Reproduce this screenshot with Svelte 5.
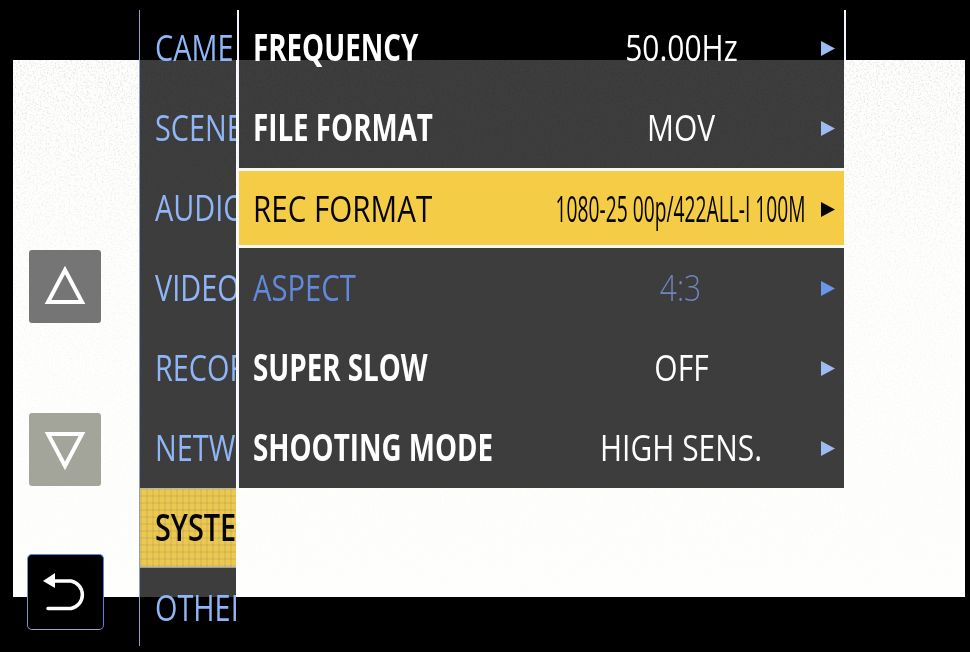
<script>
  // labels are what stays visible beside the open submenu
  const nav = [
    { label: "CAME" },
    { label: "SCENE" },
    { label: "AUDIO" },
    { label: "VIDEO" },
    { label: "RECOR" },
    { label: "NETWO" },
    { label: "SYSTE", active: true },
    { label: "OTHER" },
  ];

  const rows = [
    { label: "FREQUENCY", value: "50.00Hz" },
    { label: "FILE FORMAT", value: "MOV" },
    { label: "REC FORMAT", value: "1080-25 00p/422ALL-I 100M", active: true },
    { label: "ASPECT", value: "4:3", disabled: true },
    { label: "SUPER SLOW", value: "OFF" },
    { label: "SHOOTING MODE", value: "HIGH SENS." },
  ];
</script>

<div class="screen">
  <div class="paper">
    <svg class="grain" width="952" height="537">
      <filter id="speckle">
        <feTurbulence type="fractalNoise" baseFrequency="0.55" numOctaves="3" seed="4" />
        <feColorMatrix values="0 0 0 0 0.45  0 0 0 0 0.45  0 0 0 0 0.42  2.600 0 0 0 -1.250" />
      </filter>
      <rect width="952" height="537" filter="url(#speckle)" />
    </svg>
  </div>

  <div class="content">
    <div class="side">
      <button class="step up" aria-label="up">
        <svg width="72" height="73" viewBox="0 0 72 73">
          <polygon points="36,20 53,52 19,52" fill="none" stroke="#fff" stroke-width="4" />
        </svg>
      </button>
      <button class="step down" aria-label="down">
        <svg width="72" height="73" viewBox="0 0 72 73">
          <polygon points="19,21 53,21 36,53" fill="none" stroke="#fff" stroke-width="4" />
        </svg>
      </button>
      <button class="back" aria-label="back">
        <svg width="75" height="74" viewBox="0 0 75 74">
          <polygon points="15,26 27,18 27,33" fill="#fff" />
          <path d="M27 26H43a14 14 0 0 1 0 27.500H20" fill="none" stroke="#fff" stroke-width="3.500" stroke-linecap="round" />
        </svg>
      </button>
    </div>

    <nav class="nav">
      {#each nav as item}
        <div class="nav-item" class:active={item.active}>
          <span class="nav-label">{item.label}</span>
        </div>
      {/each}
    </nav>

    <div class="list">
      {#each rows as row}
        <div class="row" class:active={row.active} class:disabled={row.disabled}>
          <span class="label">{row.label}</span>
          <span class="value"><span class="value-text">{row.value}</span></span>
          <svg class="arrow" width="14" height="15" viewBox="0 0 14 15">
            <polygon points="0,0 14,7.500 0,15" />
          </svg>
        </div>
      {/each}
    </div>
  </div>
</div>

<style>
  :global(body) {
    margin: 0;
    background: #000;
  }

  .screen {
    position: relative;
    width: 970px;
    height: 652px;
    overflow: hidden;
    background: #000;
    font-family: "Open Sans", "Liberation Sans", sans-serif;
  }

  .paper {
    position: absolute;
    left: 13px;
    top: 60px;
    width: 952px;
    height: 537px;
    background: #fefefd;
  }

  .grain {
    display: block;
    opacity: 0.4;
    -webkit-mask-image: linear-gradient(180deg, #000 0, rgba(0, 0, 0, 0.3) 220px, rgba(0, 0, 0, 0.06) 100%);
    mask-image: linear-gradient(180deg, #000 0, rgba(0, 0, 0, 0.3) 220px, rgba(0, 0, 0, 0.06) 100%);
  }

  .content {
    position: relative;
    display: flex;
    padding-top: 8px;
  }

  .side {
    display: flex;
    flex-direction: column;
    align-items: center;
    width: 130px;
    padding: 242px 9px 0 0;
    flex: none;
  }

  .step {
    display: block;
    width: 72px;
    height: 73px;
    padding: 0;
    border: 0;
    border-radius: 3px;
    flex: none;
  }

  .step svg,
  .back svg {
    display: block;
  }

  .step.up {
    background: #757575;
  }

  .step.down {
    margin-top: 90px;
    background: #a4a59a;
  }

  .back {
    width: 77px;
    height: 76px;
    margin-top: 68px;
    padding: 0;
    flex: none;
    background: #000;
    border: 1px solid #7f93bb;
    border-top-color: #4f86e8;
    border-right-color: #4f86e8;
    border-bottom-color: #9aa5c0;
    border-radius: 5px;
    box-sizing: border-box;
  }

  .nav {
    position: relative;
    width: 98px;
    height: 640px;
    flex: none;
  }

  .nav::before {
    content: "";
    position: absolute;
    left: 0;
    top: 2px;
    bottom: 2px;
    width: 1px;
    background: #8c9fc4;
  }

  .nav-item {
    display: flex;
    align-items: center;
    height: 80px;
    margin: 0 1px;
    padding: 0 0 4px 15px;
    box-sizing: border-box;
    overflow: hidden;
    background: rgba(0, 0, 0, 0.76);
    white-space: nowrap;
  }

  .nav-item.active {
    height: 78px;
    margin-top: 1px;
    margin-bottom: 1px;
    background:
      repeating-linear-gradient(90deg, rgba(120, 110, 80, 0.12) 0 2px, rgba(255, 255, 255, 0) 2px 6px),
      repeating-linear-gradient(0deg, rgba(120, 110, 80, 0.12) 0 2px, rgba(255, 255, 255, 0) 2px 7px),
      #ecc851;
    box-shadow: 0 -1px 0 #b8b8ae, 0 1px 0 #7f9fd8;
  }

  .nav-label {
    display: inline-block;
    font-size: 37px;
    color: #8fb6f6;
    transform: scaleX(0.78);
    transform-origin: left center;
    line-height: 1;
  }

  .active .nav-label {
    color: #050505;
    font-weight: 600;
  }

  .list {
    position: relative;
    width: 605px;
    flex: none;
    align-self: flex-start;
    margin-left: 2px;
  }

  .list::before,
  .list::after {
    content: "";
    position: absolute;
    top: 2px;
    width: 2px;
    background: #f4f6ff;
  }

  .list::before {
    left: -2px;
    bottom: 0;
  }

  .list::after {
    right: -2px;
    height: 50px;
  }

  .row {
    display: grid;
    grid-template-columns: 298px 260px 24px;
    align-items: center;
    height: 80px;
    padding: 0 0 4px 14px;
    box-sizing: border-box;
    background: rgba(0, 0, 0, 0.76);
    color: #fff;
  }

  .row .arrow {
    margin: 4px 0 0 10px;
    fill: #9dbbf2;
  }

  .label {
    display: block;
    width: 240px;
    font-size: 37px;
    font-weight: 700;
    line-height: 1;
    white-space: nowrap;
    transform: scaleX(0.75);
    transform-origin: left center;
  }

  .value {
    display: flex;
    justify-content: center;
    white-space: nowrap;
  }

  .value-text {
    display: block;
    font-size: 37px;
    line-height: 1;
    transform: scaleX(0.81);
    transform-origin: center;
  }

  .row.active {
    padding-bottom: 2px;
    background: #f5cc45;
    border-top: 3px solid #f8f8f4;
    border-bottom: 3px solid #f8f8f4;
    color: #050505;
  }

  .row.active .label {
    font-weight: 500;
    transform: scaleX(0.8);
  }

  .row.active .value-text {
    transform: scaleX(0.52);
  }

  .row.active .arrow {
    fill: #050505;
  }

  .row.disabled {
    color: #6189de;
  }

  .row.disabled .label {
    font-weight: 500;
    transform: scaleX(0.79);
  }

  .row.disabled .value-text {
    color: #6f86bd;
    font-weight: 300;
  }

  .row.disabled .arrow {
    fill: #6a95ea;
  }
</style>
